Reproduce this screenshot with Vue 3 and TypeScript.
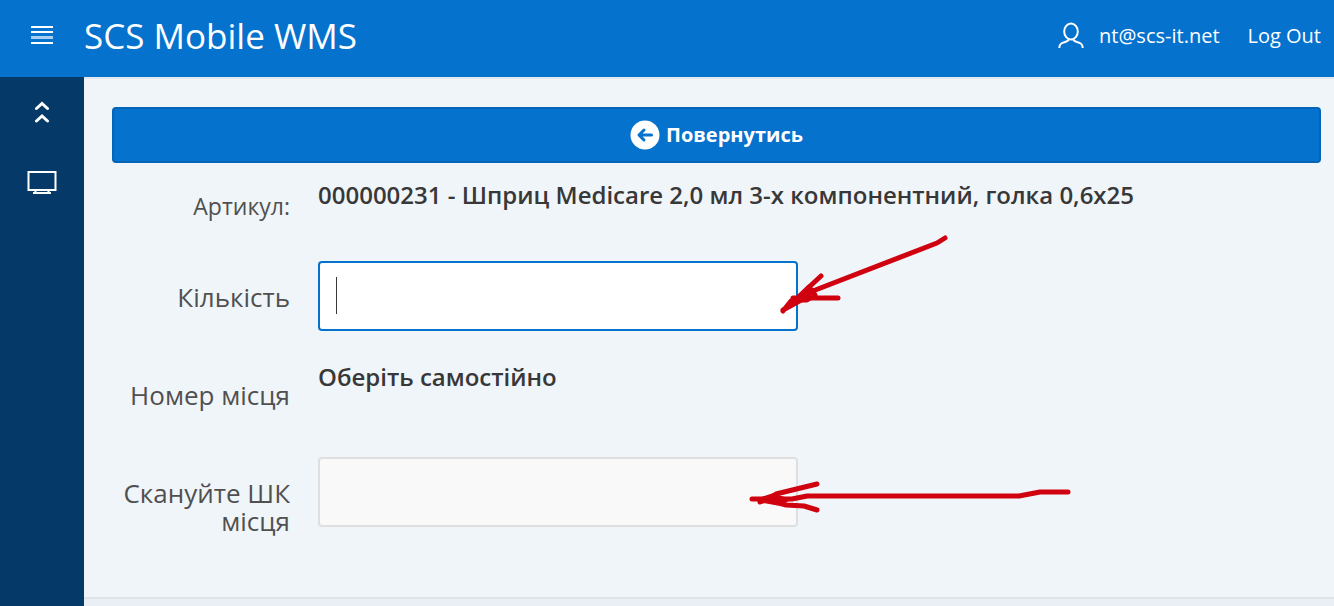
<script setup lang="ts">
import { ref } from 'vue'

const title = 'SCS Mobile WMS'
const user = 'nt@scs-it.net'
const quantity = ref('')
const placeCode = ref('')
</script>

<template>
  <div class="app">
    <header class="header">
      <button class="icon-button menu" type="button" aria-label="Menu">
        <svg width="22" height="18" viewBox="0 0 22 18" fill="#fff" aria-hidden="true">
          <rect width="22" height="2" />
          <rect y="5" width="22" height="2" />
          <rect y="10" width="22" height="3" opacity="0.65" />
          <rect y="16" width="22" height="2" />
        </svg>
      </button>
      <a class="title" href="#">{{ title }}</a>
      <nav class="user-nav">
        <a class="nav-link" href="#">
          <svg width="28" height="28" viewBox="0 0 28 28" fill="none" stroke="#fff" stroke-width="2" aria-hidden="true">
            <ellipse cx="14" cy="9.500" rx="6.800" ry="8" />
            <path d="M11.800 17 C11.800 21.500 2.300 18 2.300 26 M16.200 17 C16.200 21.500 25.700 18 25.700 26" />
          </svg>
          <span>{{ user }}</span>
        </a>
        <a class="nav-link" href="#">Log Out</a>
      </nav>
    </header>

    <div class="body">
      <aside class="sidebar">
        <button class="icon-button side" type="button" aria-label="Collapse">
          <svg width="16" height="22" viewBox="0 0 16 22" fill="none" stroke="#fff" stroke-width="3" aria-hidden="true">
            <path d="M2.500 7.500 L8 2.500 L13.500 7.500 M2.500 20 L8 15 L13.500 20" stroke-linecap="round" />
          </svg>
        </button>
        <button class="icon-button side" type="button" aria-label="Desktop">
          <svg width="30" height="24" viewBox="0 0 30 24" fill="none" stroke="#fff" stroke-width="2" aria-hidden="true">
            <path d="M1.500 2 H28.500 V20 H1.500 Z M8.500 20.500 V22 M21.500 20.500 V22 M6 23 H24" />
          </svg>
        </button>
      </aside>

      <div class="page">
        <main class="content">
          <button class="back" type="button">
            <svg width="30" height="30" viewBox="0 0 30 30" aria-hidden="true">
              <circle cx="15" cy="15" r="14.500" fill="#fff" />
              <path d="M21.500 15 H9.500 M14 10 L9 15 L14 20" fill="none" stroke="#0572ce" stroke-width="3" stroke-linecap="round" stroke-linejoin="round" />
            </svg>
            <span>Повернутись</span>
          </button>

          <form class="form" @submit.prevent>
            <div class="row article">
              <span class="label">Артикул:</span>
              <output class="value">000000231 - Шприц Medicare 2,0 мл 3-х компонентний, голка 0,6х25</output>
            </div>
            <div class="row">
              <label class="label" for="quantity">Кількість</label>
              <div class="control">
                <input id="quantity" v-model="quantity" class="field active" type="text" autocomplete="off" />
                <span class="caret"></span>
                <svg class="arrow arrow-top" width="172" height="86" viewBox="0 0 172 86" aria-hidden="true">
                  <path d="M166 8 L158 13 L26 64 L12 71 L4 81 M42 46 L14 72 M59 68 H14 M4 80 L24 69" />
                  <path class="tip" d="M30 57 L18 70 L28 70 L36 65 Z" />
                </svg>
              </div>
            </div>
            <div class="row">
              <span class="label">Номер місця</span>
              <output class="value">Оберіть самостійно</output>
            </div>
            <div class="row">
              <label class="label" for="place">Скануйте ШК місця</label>
              <div class="control">
                <input id="place" v-model="placeCode" class="field" type="text" autocomplete="off" />
                <svg class="arrow arrow-bottom" width="330" height="40" viewBox="0 0 330 40" aria-hidden="true">
                  <path d="M320 12 H292 L271 16 H59 L44 19 L4 19 M69 4 L28 14 L20 19 L12 22 M69 30 L56 26 L38 25 L20 20" />
                  <path class="tip" d="M24 16 L12 20 L30 23 L38 20 Z" />
                </svg>
              </div>
            </div>
          </form>
        </main>
        <footer class="footer"></footer>
      </div>
    </div>
  </div>
</template>

<style>
body {
  margin: 0;
}
</style>

<style scoped>
.app {
  display: flex;
  flex-direction: column;
  min-height: 100vh;
  background: #f0f5fa;
  color: #383838;
  font-family: "Open Sans", "Noto Sans", sans-serif;
}

.app * {
  box-sizing: border-box;
}

.header {
  display: flex;
  align-items: center;
  height: 77px;
  padding: 0 13px 6px 0;
  background: #0572ce;
}

.icon-button {
  display: flex;
  align-items: center;
  justify-content: center;
  padding: 0;
  border: 0;
  background: none;
}

.menu {
  width: 84px;
  height: 70px;
  align-self: flex-start;
}

.title {
  color: #fff;
  font-size: 35px;
  line-height: 48px;
  text-decoration: none;
  white-space: nowrap;
}

.user-nav {
  display: flex;
  gap: 28px;
  margin-left: auto;
}

.nav-link {
  display: flex;
  align-items: center;
  gap: 14px;
  color: #fff;
  font-size: 20px;
  line-height: 28px;
  text-decoration: none;
  white-space: nowrap;
}

.body {
  display: flex;
  flex: 1;
}

.sidebar {
  flex: none;
  width: 84px;
  background: #053a68;
}

.side {
  width: 84px;
  height: 70px;
}

.page {
  display: flex;
  flex: 1;
  flex-direction: column;
  min-width: 0;
  border-top: 2px solid #e2e8ed;
}

.content {
  padding: 28px 13px 56px 28px;
}

.back {
  display: flex;
  align-items: center;
  justify-content: center;
  gap: 6px;
  width: 100%;
  height: 56px;
  border: 2px solid #0465b8;
  border-radius: 4px;
  background: #0572ce;
  color: #fff;
  font-family: inherit;
  font-size: 20px;
  font-weight: 700;
  line-height: 28px;
}

.row {
  display: grid;
  grid-template-columns: 178px minmax(0, 1fr);
  column-gap: 28px;
  min-height: 98px;
}

.label {
  padding-top: 36px;
  color: #505050;
  font-size: 26px;
  line-height: 28px;
  text-align: right;
}

.article {
  min-height: 84px;
}

.article .label {
  padding-top: 29px;
  font-size: 23px;
}

.value {
  padding-top: 14px;
  font-size: 24px;
  font-weight: 650;
  line-height: 36px;
}

.control {
  position: relative;
  max-width: 480px;
  padding: 14px 0;
}

.field {
  display: block;
  width: 100%;
  height: 70px;
  padding: 14px 16px;
  border: 2px solid #dfdfdf;
  border-radius: 4px;
  outline: 0;
  background: #f9f9f9;
  color: #383838;
  font-family: inherit;
  font-size: 28px;
}

.active {
  border-color: #0572ce;
  background: #fff;
}

.caret {
  position: absolute;
  top: 30px;
  left: 18px;
  width: 1px;
  height: 37px;
  background: #383838;
}

.arrow {
  position: absolute;
  fill: none;
  stroke: #d0020f;
  stroke-width: 5;
  stroke-linecap: round;
  stroke-linejoin: round;
  pointer-events: none;
}

.tip {
  fill: #d0020f;
}

.arrow-top {
  top: -17px;
  left: 461px;
}

.arrow-bottom {
  top: 37px;
  left: 430px;
}

.footer {
  flex: 1;
  border-top: 2px solid #dfe4e8;
  background: #e9eff4;
}
</style>
